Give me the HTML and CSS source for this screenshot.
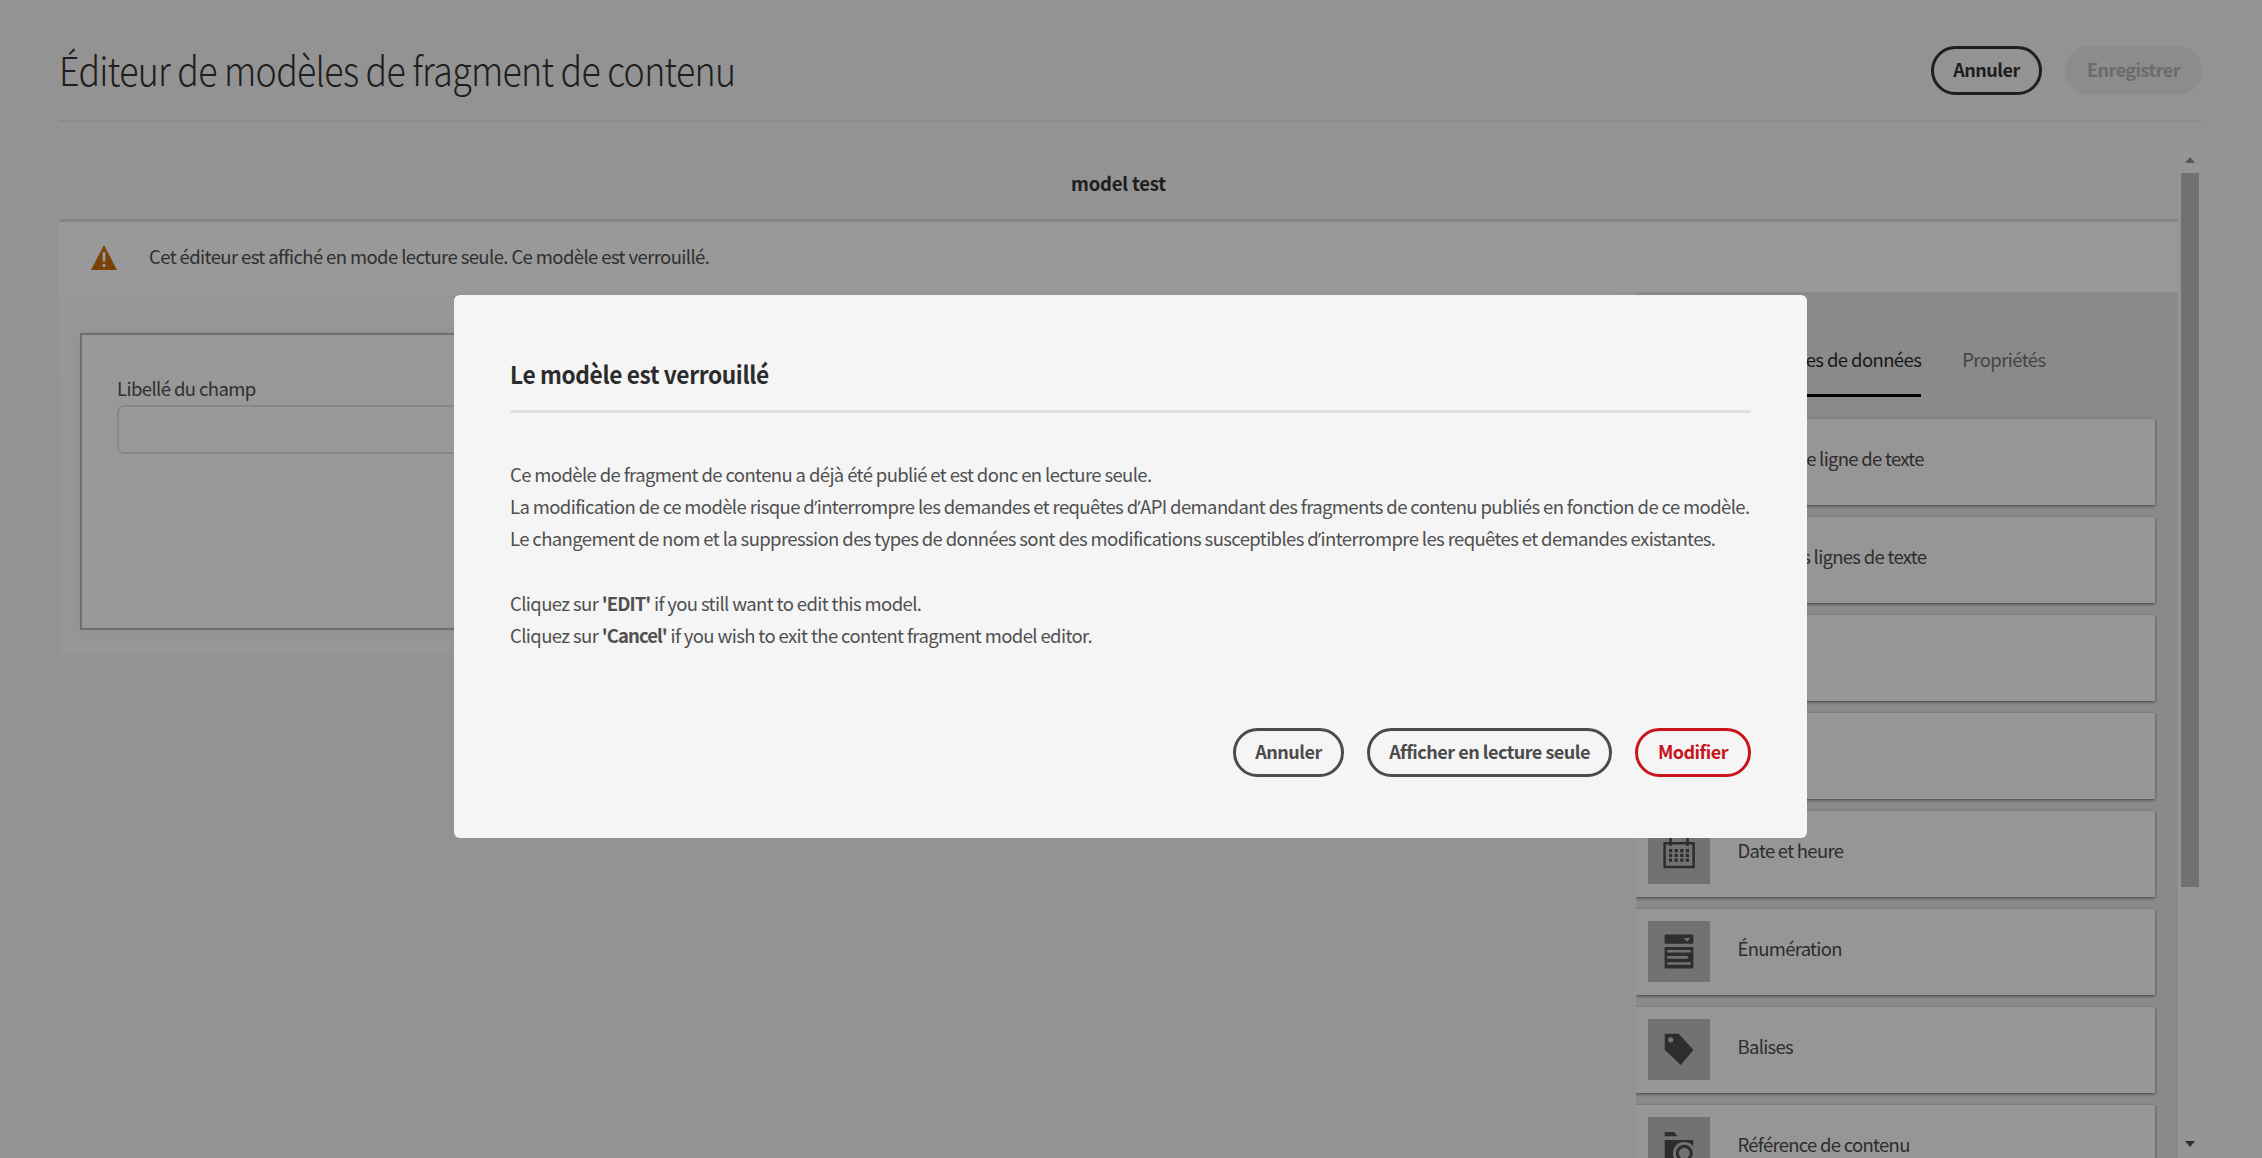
FILE: index.html
```html
<!DOCTYPE html>
<html lang="fr">
<head>
<meta charset="utf-8">
<title>Éditeur de modèles de fragment de contenu</title>
<link rel="stylesheet" href="styles.css">
</head>
<body>
<div class="page">
  <header class="header">
    <h1 class="title">Éditeur de modèles de fragment de contenu</h1>
    <div class="actions">
      <button class="btn">Annuler</button>
      <button class="btn btn-disabled">Enregistrer</button>
    </div>
  </header>
  <div class="viewport">
    <main class="editor">
      <h2 class="model-name">model test</h2>
      <div class="alert">
        <svg class="alert-icon" width="26" height="25" viewBox="0 0 26 25"><path d="M13 0 26 25H0z" fill="#cb6f10"/><path d="M13 7v9.500M13 19v3" stroke="#fff" stroke-width="2.800"/></svg>
        <span>Cet éditeur est affiché en mode lecture seule. Ce modèle est verrouillé.</span>
      </div>
      <div class="columns">
        <section class="canvas">
          <div class="field">
            <label class="field-label">Libellé du champ</label>
            <div class="field-input"></div>
          </div>
        </section>
        <aside class="sidebar">
          <nav class="tabs">
            <span class="tab tab-active">Types de données</span>
            <span class="tab">Propriétés</span>
          </nav>
          <div class="cards">
            <div class="card"><span class="card-icon"></span><span class="card-label">Une seule ligne de texte</span></div>
            <div class="card"><span class="card-icon"></span><span class="card-label">Plusieurs lignes de texte</span></div>
            <div class="card"><span class="card-icon"></span><span class="card-label">Nombre</span></div>
            <div class="card"><span class="card-icon"></span><span class="card-label">Bool</span></div>
            <div class="card"><span class="card-icon"><svg width="62" height="61" viewBox="0 0 62 61"><path d="M16.600 20.300h29v23.600h-29z" fill="none" stroke="#4b4b4b" stroke-width="2.500"/><path d="M22.500 14v9M39.500 14v9" stroke="#4b4b4b" stroke-width="2.600"/><path d="M21 27.600h20.200M21 32.300h20.200M21 37.200h20.200" stroke="#4b4b4b" stroke-width="3.200" stroke-dasharray="3.200 2.400"/></svg></span><span class="card-label">Date et heure</span></div>
            <div class="card"><span class="card-icon"><svg width="62" height="61" viewBox="0 0 62 61"><path fill="#4b4b4b" fill-rule="evenodd" d="M17.500 13.500h27q.9 0 .9.9v7.400q0 .9-.9.9h-27q-.9 0-.9-.9v-7.400q0-.9.9-.9zM35.600 17l3.400 3.800 3.400-3.800zM17.500 26h27q.9 0 .9.9v19.600q0 .9-.9.9h-27q-.9 0-.9-.9V26.900q0-.9.9-.9zM19.300 29v2.600h23.400V29zM19.300 35.100v2.600h20.400v-2.600zM19.300 41.200v2.600h23.400v-2.600z"/></svg></span><span class="card-label">Énumération</span></div>
            <div class="card"><span class="card-icon"><svg width="62" height="61" viewBox="0 0 62 61"><path fill="#4b4b4b" fill-rule="evenodd" d="M17.500 14.700h13.300l14.600 16.400-12.700 15-16-15.300V15.500q0-.8.8-.8zM22.700 18.200a2.700 2.700 0 1 0 .01 0z"/></svg></span><span class="card-label">Balises</span></div>
            <div class="card"><span class="card-icon"><svg width="62" height="61" viewBox="0 0 62 61"><path fill="#4b4b4b" d="M17.500 15h8q.8 0 1.300.7l2.700 3.500H16.700v-3.400q0-.8.8-.8zM16.700 23h28.600v24H16.700z"/><circle cx="36.300" cy="36.300" r="11.300" fill="#bebebe"/><circle cx="36.300" cy="36.300" r="7" fill="none" stroke="#4b4b4b" stroke-width="3"/></svg></span><span class="card-label">Référence de contenu</span></div>
          </div>
        </aside>
      </div>
    </main>
    <div class="scrollbar">
      <span class="arrow-up"></span>
      <span class="thumb"></span>
      <span class="arrow-down"></span>
    </div>
  </div>
</div>
<div class="backdrop">
  <div class="dialog" role="dialog">
    <h2 class="dialog-title"><span class="dialog-title-text">Le modèle est verrouillé</span></h2>
    <div class="dialog-body">
      <p>Ce modèle de fragment de contenu a déjà été publié et est donc en lecture seule.</p>
      <p>La modification de ce modèle risque d<span class="apos">’</span>interrompre les demandes et requêtes d<span class="apos">’</span>API demandant des fragments de contenu publiés en fonction de ce modèle.</p>
      <p>Le changement de nom et la suppression des types de données sont des modifications susceptibles d<span class="apos">’</span>interrompre les requêtes et demandes existantes.</p>
      <p class="spaced">Cliquez sur <b>'EDIT'</b> if you still want to edit this model.</p>
      <p>Cliquez sur <b>'Cancel'</b> if you wish to exit the content fragment model editor.</p>
    </div>
    <div class="dialog-actions">
      <button class="btn">Annuler</button>
      <button class="btn btn-view">Afficher en lecture seule</button>
      <button class="btn btn-warning">Modifier</button>
    </div>
  </div>
</div>
</body>
</html>
```
FILE: styles.css
```css
* { box-sizing: border-box; margin: 0; padding: 0; }
body {
  background: #f5f5f5;
  color: #505050;
  font: 18.5px/32px "Noto Sans CJK SC", sans-serif;
  letter-spacing: -0.6px;
  height: 1158px;
  overflow: hidden;
  white-space: nowrap;
}
.page { height: 1158px; display: flex; flex-direction: column; padding: 0 60px 0 59px; }
.header {
  height: 122px;
  flex: none;
  display: flex;
  justify-content: space-between;
  align-items: flex-start;
  border-bottom: 2px solid #e8e8e8;
  padding-top: 46px;
}
.title {
  font-size: 40px;
  line-height: 46px;
  font-weight: 300;
  color: #323232;
  letter-spacing: -0.8px;
  transform: scaleX(.894);
  transform-origin: 0 0;
}
.actions { display: flex; gap: 23px; }
.btn {
  height: 49px;
  width: 111px;
  border: 3px solid #4b4b4b;
  border-radius: 25px;
  background: transparent;
  color: #4b4b4b;
  font: 700 18px/38px "Noto Sans CJK SC", sans-serif;
  letter-spacing: -0.5px;
  padding-bottom: 3px;
}
.header .btn { border-color: #323232; color: #323232; }
.header .btn-disabled { width: 137px; background: #eaeaea; border-color: #eaeaea; color: #b3b3b3; }
.viewport { flex: 1; min-height: 0; margin-top: 25px; display: flex; }
.editor { flex: 1; display: flex; flex-direction: column; min-width: 0; }
.model-name {
  height: 75px;
  flex: none;
  border-bottom: 3px solid #dcdcdc;
  text-align: center;
  font-size: 18.5px;
  line-height: 72px;
  font-weight: 700;
  color: #323232;
  letter-spacing: -0.2px;
}
.alert { height: 70px; flex: none; background: #fff; display: flex; align-items: flex-start; padding: 18px 0 0 32px; gap: 32px; }
.alert-icon { margin-top: 5px; }
.columns { flex: 1; min-height: 0; display: flex; justify-content: space-between; align-items: flex-start; }
.canvas { width: 1555px; height: 362px; background: linear-gradient(#fcfcfc, #fafafa); padding: 41px 22px 24px 21px; }
.field { height: 297px; border: 2px solid #b9b9b9; background: #fdfdfd; box-shadow: 0 0 14px rgba(0, 0, 0, .06); padding: 39px 35px; }
.field-label { display: block; height: 31px; line-height: 29px; }
.field-input { height: 49px; border: 2px solid #e1e1e1; border-radius: 7px; background: #fff; }
.sidebar { width: 542px; height: 866px; background: #e7e7e7; overflow: hidden; }
.tabs { height: 105px; border-bottom: 2px solid #eaeaea; display: flex; gap: 41px; padding: 0 0 0 140px; color: #747474; }
.tab { height: 105px; line-height: 135px; }
.tab-active { color: #2c2c2c; border-bottom: 3px solid #000; }
.cards { display: flex; flex-direction: column; gap: 12px; padding: 22px 23px 0 0; }
.card {
  height: 86px;
  flex: none;
  display: flex;
  align-items: flex-start;
  gap: 27.5px;
  padding: 12px;
  background: #fbfbfb;
  box-shadow: 0 1px 3px rgba(0, 0, 0, .55);
  color: #4b4b4b;
}
.card-icon { width: 62px; height: 61px; background: #bebebe; flex: none; }
.card-icon svg { display: block; }
.card-label { margin-top: 11px; letter-spacing: -0.72px; }
.scrollbar { width: 24px; background: #f9f9f9; display: flex; flex-direction: column; align-items: center; padding-bottom: 11px; }
.arrow-up { margin-top: 10px; border: 5px solid transparent; border-top: 0; border-bottom: 6px solid #939393; }
.thumb { width: 18px; height: 714px; margin-top: 10px; background: #bdbdbd; }
.arrow-down { margin-top: auto; border: 5px solid transparent; border-bottom: 0; border-top: 6px solid #4b4b4b; }
.backdrop { position: fixed; inset: 0; background: rgba(0, 0, 0, .4); padding: 295px 455px 0 454px; }
.dialog { height: 543px; background: #f5f5f5; border-radius: 6px; padding: 59px 56px 0; }
.dialog-title { height: 59px; border-bottom: 3px solid #e1e1e1; font-size: 24px; line-height: 40px; font-weight: 700; color: #2c2c2c; letter-spacing: -0.4px; }
.dialog-title-text { display: inline-block; transform: scaleX(.946); transform-origin: 0 0; }
.dialog-body { height: 252px; margin-top: 45px; line-height: 32.2px; letter-spacing: -0.62px; }
.dialog-body .spaced { margin-top: 32px; }
.dialog-body b { font-weight: 700; letter-spacing: -0.95px; }
.apos { font-family: "Open Sans", sans-serif; line-height: 1; }
.dialog-actions { display: flex; justify-content: flex-end; gap: 23px; margin-top: 18px; }
.btn-view { width: 245px; }
.btn-warning { width: 116px; color: #c9131d; border-color: #c9131d; }
```
